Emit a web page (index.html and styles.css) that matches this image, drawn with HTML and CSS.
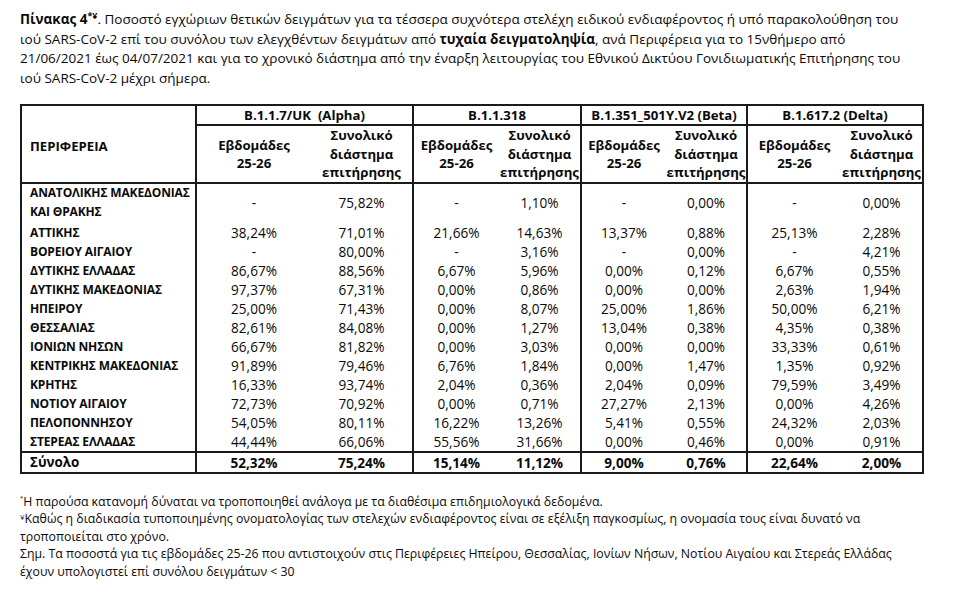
FILE: index.html
```html
<!DOCTYPE html>
<html lang="el">
<head>
<meta charset="utf-8">
<title>Πίνακας 4</title>
<link rel="stylesheet" href="styles.css">
</head>
<body>
<div class="page">
  <p class="caption"><b>Πίνακας 4<sup>*¥</sup></b>. Ποσοστό εγχώριων θετικών δειγμάτων για τα τέσσερα συχνότερα στελέχη ειδικού ενδιαφέροντος ή υπό παρακολούθηση του<br>ιού SARS-CoV-2 επί του συνόλου των ελεγχθέντων δειγμάτων από <b>τυχαία δειγματοληψία</b>, ανά Περιφέρεια για το 15νθήμερο από<br>21/06/2021 έως 04/07/2021 και για το χρονικό διάστημα από την έναρξη λειτουργίας του Εθνικού Δικτύου Γονιδιωματικής Επιτήρησης του<br>ιού SARS-CoV-2 μέχρι σήμερα.</p>

  <table class="data">
    <colgroup>
      <col class="c-region">
      <col class="c-a1"><col class="c-a2">
      <col class="c-b1"><col class="c-b2">
      <col class="c-c1"><col class="c-c2">
      <col class="c-d1"><col class="c-d2">
    </colgroup>
    <thead>
      <tr class="grp">
        <th rowspan="2" class="region-h">ΠΕΡΙΦΕΡΕΙΑ</th>
        <th colspan="2" class="gs">B.1.1.7/UK&nbsp; (Alpha)</th>
        <th colspan="2" class="gs">B.1.1.318</th>
        <th colspan="2" class="gs">B.1.351_501Y.V2 (Beta)</th>
        <th colspan="2" class="gs">B.1.617.2 (Delta)</th>
      </tr>
      <tr class="sub">
        <th class="gs">Εβδομάδες<br>25-26</th><th>Συνολικό<br>διάστημα<br>επιτήρησης</th>
        <th class="gs">Εβδομάδες<br>25-26</th><th>Συνολικό<br>διάστημα<br>επιτήρησης</th>
        <th class="gs">Εβδομάδες<br>25-26</th><th>Συνολικό<br>διάστημα<br>επιτήρησης</th>
        <th class="gs">Εβδομάδες<br>25-26</th><th>Συνολικό<br>διάστημα<br>επιτήρησης</th>
      </tr>
    </thead>
    <tbody>
      <tr class="first"><th class="rg">ΑΝΑΤΟΛΙΚΗΣ ΜΑΚΕΔΟΝΙΑΣ<br>ΚΑΙ ΘΡΑΚΗΣ</th><td class="gs">-</td><td>75,82%</td><td class="gs">-</td><td>1,10%</td><td class="gs">-</td><td>0,00%</td><td class="gs">-</td><td>0,00%</td></tr>
      <tr><th class="rg">ΑΤΤΙΚΗΣ</th><td class="gs">38,24%</td><td>71,01%</td><td class="gs">21,66%</td><td>14,63%</td><td class="gs">13,37%</td><td>0,88%</td><td class="gs">25,13%</td><td>2,28%</td></tr>
      <tr><th class="rg">ΒΟΡΕΙΟΥ ΑΙΓΑΙΟΥ</th><td class="gs">-</td><td>80,00%</td><td class="gs">-</td><td>3,16%</td><td class="gs">-</td><td>0,00%</td><td class="gs">-</td><td>4,21%</td></tr>
      <tr><th class="rg">ΔΥΤΙΚΗΣ ΕΛΛΑΔΑΣ</th><td class="gs">86,67%</td><td>88,56%</td><td class="gs">6,67%</td><td>5,96%</td><td class="gs">0,00%</td><td>0,12%</td><td class="gs">6,67%</td><td>0,55%</td></tr>
      <tr><th class="rg">ΔΥΤΙΚΗΣ ΜΑΚΕΔΟΝΙΑΣ</th><td class="gs">97,37%</td><td>67,31%</td><td class="gs">0,00%</td><td>0,86%</td><td class="gs">0,00%</td><td>0,00%</td><td class="gs">2,63%</td><td>1,94%</td></tr>
      <tr><th class="rg">ΗΠΕΙΡΟΥ</th><td class="gs">25,00%</td><td>71,43%</td><td class="gs">0,00%</td><td>8,07%</td><td class="gs">25,00%</td><td>1,86%</td><td class="gs">50,00%</td><td>6,21%</td></tr>
      <tr><th class="rg">ΘΕΣΣΑΛΙΑΣ</th><td class="gs">82,61%</td><td>84,08%</td><td class="gs">0,00%</td><td>1,27%</td><td class="gs">13,04%</td><td>0,38%</td><td class="gs">4,35%</td><td>0,38%</td></tr>
      <tr><th class="rg">ΙΟΝΙΩΝ ΝΗΣΩΝ</th><td class="gs">66,67%</td><td>81,82%</td><td class="gs">0,00%</td><td>3,03%</td><td class="gs">0,00%</td><td>0,00%</td><td class="gs">33,33%</td><td>0,61%</td></tr>
      <tr><th class="rg">ΚΕΝΤΡΙΚΗΣ ΜΑΚΕΔΟΝΙΑΣ</th><td class="gs">91,89%</td><td>79,46%</td><td class="gs">6,76%</td><td>1,84%</td><td class="gs">0,00%</td><td>1,47%</td><td class="gs">1,35%</td><td>0,92%</td></tr>
      <tr><th class="rg">ΚΡΗΤΗΣ</th><td class="gs">16,33%</td><td>93,74%</td><td class="gs">2,04%</td><td>0,36%</td><td class="gs">2,04%</td><td>0,09%</td><td class="gs">79,59%</td><td>3,49%</td></tr>
      <tr><th class="rg">ΝΟΤΙΟΥ ΑΙΓΑΙΟΥ</th><td class="gs">72,73%</td><td>70,92%</td><td class="gs">0,00%</td><td>0,71%</td><td class="gs">27,27%</td><td>2,13%</td><td class="gs">0,00%</td><td>4,26%</td></tr>
      <tr><th class="rg">ΠΕΛΟΠΟΝΝΗΣΟΥ</th><td class="gs">54,05%</td><td>80,11%</td><td class="gs">16,22%</td><td>13,26%</td><td class="gs">5,41%</td><td>0,55%</td><td class="gs">24,32%</td><td>2,03%</td></tr>
      <tr><th class="rg">ΣΤΕΡΕΑΣ ΕΛΛΑΔΑΣ</th><td class="gs">44,44%</td><td>66,06%</td><td class="gs">55,56%</td><td>31,66%</td><td class="gs">0,00%</td><td>0,46%</td><td class="gs">0,00%</td><td>0,91%</td></tr>
    </tbody>
    <tfoot>
      <tr class="total"><th class="rg">Σύνολο</th><td class="gs">52,32%</td><td>75,24%</td><td class="gs">15,14%</td><td>11,12%</td><td class="gs">9,00%</td><td>0,76%</td><td class="gs">22,64%</td><td>2,00%</td></tr>
    </tfoot>
  </table>

  <div class="notes">
    <p><sup class="tiny">*</sup>Η παρούσα κατανομή δύναται να τροποποιηθεί ανάλογα με τα διαθέσιμα επιδημιολογικά δεδομένα.</p>
    <p><sup class="yen">¥</sup>Καθώς η διαδικασία τυποποιημένης ονοματολογίας των στελεχών ενδιαφέροντος είναι σε εξέλιξη παγκοσμίως, η ονομασία τους είναι δυνατό να<br>τροποποιείται στο χρόνο.</p>
    <p>Σημ. Τα ποσοστά για τις εβδομάδες 25-26 που αντιστοιχούν στις Περιφέρειες Ηπείρου, Θεσσαλίας, Ιονίων Νήσων, Νοτίου Αιγαίου και Στερεάς Ελλάδας<br>έχουν υπολογιστεί επί συνόλου δειγμάτων &lt; 30</p>
  </div>
</div>
</body>
</html>
```

FILE: styles.css
```css
html, body {
  margin: 0;
  padding: 0;
  background: #ffffff;
}

body {
  font-family: "Open Sans", "Noto Sans", "DejaVu Sans", sans-serif;
  color: #0a0a0a;
  font-size: 13px;
}

.page {
  padding: 10px 0 0 20px;
}

.caption {
  margin: 0;
  font-size: 13.5px;
  line-height: 19.5px;
  white-space: nowrap;
}

.caption b {
  font-weight: 700;
}

.caption sup {
  font-size: 9px;
  line-height: 0;
  vertical-align: 5px;
}

.data {
  margin-top: 16px;
  border-collapse: collapse;
  table-layout: fixed;
  width: 902px;
  border: 2px solid #1a1a1a;
  font-size: 13px;
}

.c-region { width: 175px; }
.c-a1 { width: 115px; }
.c-a2 { width: 102px; }
.c-b1 { width: 86px; }
.c-b2 { width: 82px; }
.c-c1 { width: 85px; }
.c-c2 { width: 81px; }
.c-d1 { width: 94px; }
.c-d2 { width: 82px; }

.data th,
.data td {
  padding: 0;
  white-space: nowrap;
  overflow: visible;
}

.data thead th {
  font-weight: 700;
  text-align: center;
  vertical-align: middle;
  font-size: 13.2px;
}

.grp th {
  height: 18px;
  line-height: 18px;
  border-bottom: 2px solid #1a1a1a;
}

.sub th {
  height: 56px;
  line-height: 18.5px;
  border-bottom: 2px solid #1a1a1a;
}

.data .region-h {
  text-align: left;
  padding-left: 8px;
  border-right: 2px solid #1a1a1a;
  border-bottom: 2px solid #1a1a1a;
  padding-top: 4px;
}

.gs {
  border-left: 2px solid #1a1a1a;
}

.data tbody tr {
  height: 19px;
}

.data tbody tr.first {
  height: 36px;
}

.data tbody tr.first th {
  line-height: 18.5px;
}

.data tbody tr.first + tr td,
.data tbody tr.first + tr th {
  padding-top: 2px;
}

.data .rg {
  text-align: left;
  padding-left: 8px;
  font-weight: 700;
  font-size: 12px;
  letter-spacing: -0.15px;
  border-right: 2px solid #1a1a1a;
  line-height: 19px;
}

.data td {
  text-align: center;
  line-height: 19px;
  vertical-align: middle;
  font-size: 13.6px;
}

.total th,
.total td {
  border-top: 2px solid #1a1a1a;
  font-weight: 700;
  height: 19px;
}

.data .total .rg {
  font-size: 13.4px;
  letter-spacing: 0;
}

.notes {
  margin-top: 19px;
  font-size: 12.3px;
  line-height: 17.4px;
  white-space: nowrap;
}

.notes p {
  margin: 0;
}

.notes sup {
  line-height: 0;
}

.notes .tiny {
  font-size: 6px;
  vertical-align: 6px;
}

.notes .yen {
  font-size: 8px;
  vertical-align: 3px;
}
```
